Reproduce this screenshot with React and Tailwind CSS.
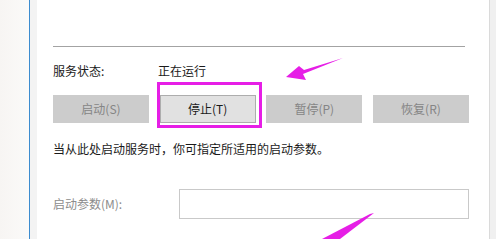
export default function App() {
  const buttons = [
    { label: '启动(S)', enabled: false },
    { label: '停止(T)', enabled: true },
    { label: '暂停(P)', enabled: false },
    { label: '恢复(R)', enabled: false },
  ];

  return (
    <div
      className="relative flex w-[496px] h-[239px] overflow-hidden bg-white text-[12px] text-[#1a1a1a]"
      style={{ fontFamily: '"Noto Sans CJK SC", "Noto Sans", sans-serif' }}
    >
      {/* Left window edge */}
      <div className="w-[29px] shrink-0 bg-gradient-to-r from-[#f7f5f3] to-[#fbfaf9]" />
      <div className="w-px shrink-0 bg-[#3d8ccf]" />
      <div className="w-[7px] shrink-0 bg-[#f3f3f3]" />

      {/* Dialog content */}
      <div className="flex-1 flex flex-col pl-[16px] pr-[20px]">
        <div className="mt-[46px] h-px w-[412px] bg-[#a3a3a3]" />

        <div className="flex items-center h-[18px] mt-[15px]">
          <span className="w-[105px]">服务状态:</span>
          <span>正在运行</span>
        </div>

        <div className="flex justify-between mt-[15px] w-[416px]">
          {buttons.map((b) => (
            <div
              key={b.label}
              className={
                b.enabled
                  ? 'w-[96px] h-[28px] flex items-center justify-center bg-[#e1e1e1] border border-[#adadad] text-[#1a1a1a]'
                  : 'w-[96px] h-[28px] flex items-center justify-center bg-[#cccccc] text-[#858585]'
              }
            >
              {b.label}
            </div>
          ))}
        </div>

        <div className="h-[18px] flex items-center mt-[17px]">
          当从此处启动服务时，你可指定所适用的启动参数。
        </div>

        <div className="flex items-center mt-[31px]">
          <span className="w-[126px] text-[#8c8c8c]">启动参数(M):</span>
          <div className="w-[290px] h-[30px] border border-[#c9c9c9] bg-white" />
        </div>
      </div>

      {/* Right window edge */}
      <div className="w-px shrink-0 bg-[#dadada]" />
      <div className="w-[6px] shrink-0 bg-[#f0f0f0]" />

      {/* Magenta annotation box */}
      <div className="absolute left-[157px] top-[82px] w-[105px] h-[46px] border-[3px] border-[#e61ee6]" />

      {/* Magenta arrows */}
      <svg className="absolute inset-0 pointer-events-none" width="496" height="239" viewBox="0 0 496 239">
        <path d="M343 58 L304 70 L299 66 L286 77 L306 80 L303 74 Z" fill="#e61ee6" />
        <path d="M374 213 L340 239 L322 239 L370 214 Z" fill="#e61ee6" />
      </svg>
    </div>
  );
}
